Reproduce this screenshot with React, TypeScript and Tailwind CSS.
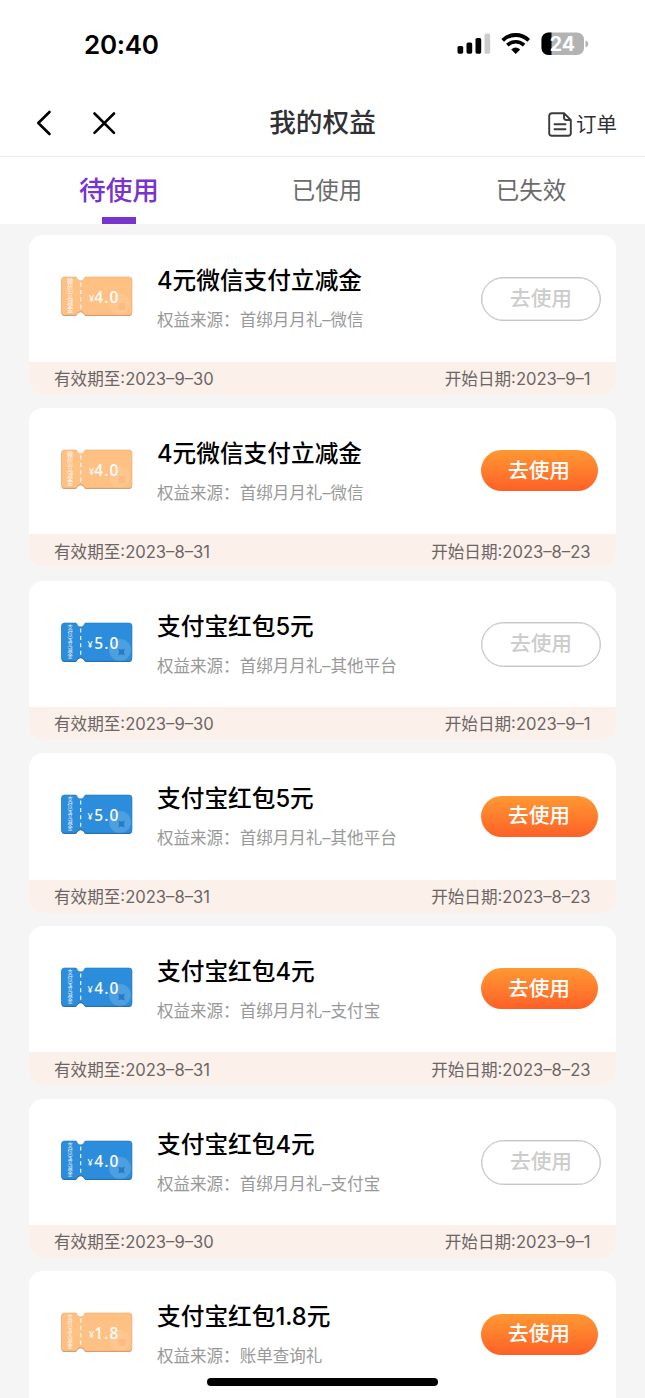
type Benefit = {
  title: string
  source: string
  vendor: string
  amount: string
  color: "orange" | "blue"
  start?: string
  end?: string
  active: boolean
}

const benefits: Benefit[] = [
  { title: "4元微信支付立减金", source: "首绑月月礼–微信", vendor: "微信立减金", amount: "4.0", color: "orange", start: "2023–9–1", end: "2023–9–30", active: false },
  { title: "4元微信支付立减金", source: "首绑月月礼–微信", vendor: "微信立减金", amount: "4.0", color: "orange", start: "2023–8–23", end: "2023–8–31", active: true },
  { title: "支付宝红包5元", source: "首绑月月礼–其他平台", vendor: "支付宝立减金", amount: "5.0", color: "blue", start: "2023–9–1", end: "2023–9–30", active: false },
  { title: "支付宝红包5元", source: "首绑月月礼–其他平台", vendor: "支付宝立减金", amount: "5.0", color: "blue", start: "2023–8–23", end: "2023–8–31", active: true },
  { title: "支付宝红包4元", source: "首绑月月礼–支付宝", vendor: "支付宝立减金", amount: "4.0", color: "blue", start: "2023–8–23", end: "2023–8–31", active: true },
  { title: "支付宝红包4元", source: "首绑月月礼–支付宝", vendor: "支付宝立减金", amount: "4.0", color: "blue", start: "2023–9–1", end: "2023–9–30", active: false },
  { title: "支付宝红包1.8元", source: "账单查询礼", vendor: "支付宝立减金", amount: "1.8", color: "orange", active: true },
]

const ticketPath =
  "M3 0H14C15 0 15.3 .7 15.6 1.4C16.3 2.9 17.6 3.8 19.2 3.8C20.8 3.8 22 2.9 22.7 1.4C23 .7 23.4 0 24.4 0H67.5Q70.5 0 70.5 3V35Q70.5 38 67.5 38H24.4C23.4 38 23 37.3 22.7 36.6C22 35.1 20.8 34.2 19.2 34.2C17.6 34.2 16.3 35.1 15.6 36.6C15.3 37.3 15 38 14 38H3Q0 38 0 35V3Q0 0 3 0Z"

function Ticket({ vendor, amount, color }: Pick<Benefit, "vendor" | "amount" | "color">) {
  const blue = color === "blue"
  const step = 34 / vendor.length
  return (
    <svg width="75" height="43" viewBox="-1.500 -1 75 43" className="shrink-0">
      <path d={ticketPath} transform="translate(0 1)" fill={blue ? "#2a6ea8" : "#c99a72"} />
      <path d={ticketPath} fill={blue ? "#2b8ddb" : "#ffc083"} stroke={blue ? "#2779bd" : "#e9ab74"} strokeWidth=".6" />
      <path d="M19.200 5.500V34" stroke="#fff" strokeWidth="1.100" strokeDasharray="4 3.400" />
      {blue ? (
        <>
          <circle cx="58.500" cy="27" r="11" fill="#fff" opacity=".16" />
          <path d="M56.500 25.500q3.500 2 7 0q-2 3.500 0 7q-3.500-2-7 0q2-3.500 0-7z" fill="#1973bd" opacity=".8" />
        </>
      ) : (
        <>
          <circle cx="58" cy="27" r="10.500" fill="#fff" opacity=".1" />
          <rect x="57" y="26" width="7" height="7" rx="1" fill="#f5a765" opacity=".3" />
        </>
      )}
      <g fill="#fff" fontFamily="'Noto Sans CJK SC', sans-serif" textAnchor="middle">
        {vendor.split("").map((char, i) => (
          <text key={i} x="8.500" y={1.500 + step * (i + 0.86)} fontSize={step * 0.92} opacity=".95">
            {char}
          </text>
        ))}
      </g>
      <text x={blue ? 26 : 27.500} y="25" fill="#fff" fontSize="9" fontFamily="'Noto Sans', sans-serif">
        ¥
      </text>
      <text x="32.800" y="25.500" fill="#fff" fontSize="15.500" fontWeight="500" letterSpacing="1" fontFamily="'Noto Sans', sans-serif">
        {amount}
      </text>
    </svg>
  )
}

function StatusBar() {
  return (
    <div className="flex h-[88px] items-center justify-between pr-[56px] pl-[84px]">
      <span className="pt-px text-[26px] leading-8 font-semibold tracking-[-0.3px] text-black">20:40</span>
      <div className="flex items-center">
        <svg width="34" height="22" viewBox="0 0 34 22">
          <rect x="0.500" y="13" width="5.700" height="7.700" rx="1.600" />
          <rect x="9.500" y="9.500" width="5.700" height="11.200" rx="1.600" />
          <rect x="18.500" y="5" width="5.700" height="15.700" rx="1.600" />
          <rect x="27.500" y="0.500" width="5.700" height="20.200" rx="1.600" fill="#ccc" />
        </svg>
        <svg width="30" height="22" viewBox="0 0 30 22" className="ml-[10px]" fill="none" stroke="#000">
          <path d="M1.700 7.300C9 .2 20.400 .2 27.700 7.300" strokeWidth="3.800" />
          <path d="M6.300 12.200C11.200 7.600 18.200 7.600 23.100 12.200" strokeWidth="3.700" />
          <path d="M10.200 16.500Q14.700 12.400 19.200 16.500L14.700 20.900Z" fill="#000" stroke="none" />
        </svg>
        <svg width="48" height="24" viewBox="0 0 48 24" className="ml-[10px]">
          <clipPath id="battery">
            <rect x="0.500" y="0.500" width="42.500" height="22.500" rx="7" />
          </clipPath>
          <g clipPath="url(#battery)">
            <rect width="44" height="24" fill="#b3b3b3" />
            <rect width="10.500" height="24" />
          </g>
          <path d="M44.500 8.500Q47.300 9.300 47.300 12T44.500 15.500Z" fill="#b3b3b3" />
          <text x="21.300" y="18.800" fill="#fff" fontSize="19.500" fontWeight="700" textAnchor="middle" fontFamily="Inter, sans-serif">
            24
          </text>
        </svg>
      </div>
    </div>
  )
}

function NavBar() {
  return (
    <div className="flex h-[69px] items-center justify-between border-b border-[#ececec] pr-[28px] pl-[36px]">
      <div className="flex w-[152px] items-center gap-[40px] pt-[2px]">
        <svg width="16" height="26" viewBox="0 0 16 26" fill="none" stroke="#000" strokeWidth="2.600" strokeLinecap="round" strokeLinejoin="round">
          <path d="M13.500 2L2.300 13L13.500 24" />
        </svg>
        <svg width="24" height="24" viewBox="0 0 24 24" fill="none" stroke="#000" strokeWidth="2.600" strokeLinecap="round">
          <path d="M2.500 2.500L22 21.800M22 2.500L2.500 21.800" />
        </svg>
      </div>
      <h1 className="text-[26.700px] leading-10 font-medium text-[#303134]">我的权益</h1>
      <div className="flex w-[160px] items-center justify-end gap-[4px] pt-[5px]">
        <svg width="24" height="25" viewBox="0 0 24 25" fill="none" stroke="#3b3b3d" strokeWidth="1.900" strokeLinecap="round" strokeLinejoin="round">
          <path d="M16 1.200H4Q1.200 1.200 1.200 4V21Q1.200 23.800 4 23.800H20Q22.800 23.800 22.800 21V8L16 1.200V5.500Q16 8 18.500 8H22.800" />
          <path d="M6.500 12.200H17.500M6.500 17.200H17.500" />
        </svg>
        <span className="text-[20.500px] leading-7 text-[#303134]">订单</span>
      </div>
    </div>
  )
}

function Tabs() {
  return (
    <div className="flex h-[67px] pr-[12px] pl-[17px] text-[23.500px] text-[#6b6b6b]">
      <div className="flex flex-1 flex-col items-center justify-between">
        <span className="pt-[13px] text-[26.700px] leading-10 font-medium text-[#7834cc]">待使用</span>
        <div className="h-[7px] w-[34px] bg-[#7834cc]" />
      </div>
      <span className="flex-1 pt-[14px] pl-[4px] text-center leading-10">已使用</span>
      <span className="flex-1 pt-[14px] text-center leading-10">已失效</span>
    </div>
  )
}

function BenefitCard({ item }: { item: Benefit }) {
  return (
    <div className="h-[159.330px] shrink-0 overflow-hidden rounded-[14px] bg-white">
      <div className="flex h-[126.500px] pl-[31px]">
        <div className="pt-[41px]">
          <Ticket vendor={item.vendor} amount={item.amount} color={item.color} />
        </div>
        <div className="flex-1 pt-[28px] pl-[22px]">
          <h2 className="text-[23.700px] leading-9 font-medium text-black">{item.title}</h2>
          <p className="mt-[9px] text-[16.550px] leading-6 text-[#999]">权益来源：{item.source}</p>
        </div>
        {item.active ? (
          <button className="mt-[42.500px] mr-[18px] h-[41px] w-[117px] rounded-full bg-linear-to-b from-[#ff9833] to-[#fd5f27] pb-px text-[20.700px] font-medium text-white">
            去使用
          </button>
        ) : (
          <button className="mt-[41.500px] mr-[14.500px] h-[44.500px] w-[120px] rounded-full border border-[#c6c6c6] pb-px text-[20.700px] font-medium text-[#ccc] inset-shadow-[0_0_0_0.5px_#d0d0d0]">
            去使用
          </button>
        )}
      </div>
      {item.end && (
        <div className="flex h-[33px] items-center justify-between bg-[#fcf0eb] px-[25px] pt-[2px] text-[16.600px] text-[#6b6665]">
          <span>有效期至:{item.end}</span>
          <span>开始日期:{item.start}</span>
        </div>
      )}
    </div>
  )
}

export default function App() {
  return (
    <div className="relative flex h-[1398px] w-[645px] flex-col overflow-hidden bg-white font-['Inter','Noto_Sans_CJK_SC',sans-serif]">
      <StatusBar />
      <NavBar />
      <Tabs />
      <div className="flex min-h-0 flex-1 flex-col gap-[13.330px] overflow-hidden bg-[#f5f5f5] pt-[11.330px] pr-[29.500px] pl-[29px]">
        {benefits.map((item, i) => (
          <BenefitCard key={i} item={item} />
        ))}
      </div>
      <div className="absolute bottom-[12px] left-[207px] h-[8px] w-[231px] rounded-full bg-black" />
    </div>
  )
}
